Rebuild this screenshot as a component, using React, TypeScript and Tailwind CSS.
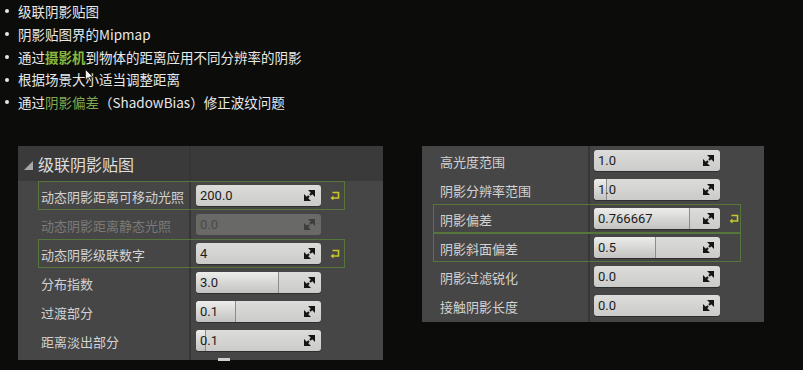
import type { ReactNode } from 'react'

type Row = {
  label: string
  value: string
  highlight?: boolean
  disabled?: boolean
  reset?: boolean
  fill?: number
}

const leftRows: Row[] = [
  { label: '动态阴影距离可移动光照', value: '200.0', highlight: true, reset: true },
  { label: '动态阴影距离静态光照', value: '0.0', disabled: true },
  { label: '动态阴影级联数字', value: '4', highlight: true, reset: true },
  { label: '分布指数', value: '3.0', fill: 83 },
  { label: '过渡部分', value: '0.1', fill: 40 },
  { label: '距离淡出部分', value: '0.1', fill: 10 },
]

const rightRows: Row[] = [
  { label: '高光度范围', value: '1.0' },
  { label: '阴影分辨率范围', value: '1.0', fill: 13 },
  { label: '阴影偏差', value: '0.766667', fill: 96, highlight: true, reset: true },
  { label: '阴影斜面偏差', value: '0.5', fill: 62, highlight: true },
  { label: '阴影过滤锐化', value: '0.0' },
  { label: '接触阴影长度', value: '0.0' },
]

const cjk = { fontFamily: '"Noto Sans CJK SC", "Noto Sans", sans-serif' }

function SpinIcon({ dim }: { dim?: boolean }) {
  const c = dim ? '#3e3e3e' : '#151515'
  return (
    <svg width="11" height="11" viewBox="0 0 11 11">
      <polygon points="4,0 11,0 11,7" fill={c} />
      <line x1="8.5" y1="2.5" x2="6" y2="5" stroke={c} strokeWidth="2.2" />
      <polygon points="0,4 0,11 7,11" fill={c} />
      <line x1="2.5" y1="8.5" x2="5" y2="6" stroke={c} strokeWidth="2.2" />
    </svg>
  )
}

function ResetIcon() {
  return (
    <svg width="11" height="10" viewBox="0 0 11 10">
      <path d="M2.5 1.5 H8.5 V7 H3" fill="none" stroke="#c9c62c" strokeWidth="1.6" />
      <polygon points="0.5,7 3.5,4.6 3.5,9.4" fill="#c9c62c" />
    </svg>
  )
}

function Field({ row, width }: { row: Row; width: number }) {
  if (row.disabled) {
    return (
      <div
        className="relative flex h-[21px] items-center rounded-[3px] bg-[#696968] pl-[4px]"
        style={{ width }}
      >
        <span className="text-[13px] text-[#4a4a4a]" style={{ fontFamily: 'Roboto, sans-serif' }}>
          {row.value}
        </span>
        <span className="absolute right-[6px] top-[5px]">
          <SpinIcon dim />
        </span>
      </div>
    )
  }
  return (
    <div
      className="relative flex h-[21px] items-center overflow-hidden rounded-[3px] bg-gradient-to-b from-[#dcdcda] to-[#cbcbc9] pl-[4px] shadow-[0_1px_0_#2e2e2e]"
      style={{ width }}
    >
      {row.fill ? (
        <div
          className="absolute left-0 top-0 h-full rounded-l-[3px] border-r border-[#8c8c8a] bg-gradient-to-b from-[#ededeb] to-[#c2c2c0]"
          style={{ width: row.fill }}
        />
      ) : null}
      <span className="relative text-[13px] text-[#1c1c1c]" style={{ fontFamily: 'Roboto, sans-serif' }}>
        {row.value}
      </span>
      <span className="absolute right-[6px] top-[5px]">
        <SpinIcon />
      </span>
    </div>
  )
}

function PropRow({
  row,
  labelW,
  fieldW,
  labelPad,
}: {
  row: Row
  labelW: number
  fieldW: number
  labelPad: string
}) {
  return (
    <div
      className={`flex h-[29px] items-center ${row.highlight ? 'border border-[#56763b]' : 'border border-transparent'}`}
    >
      <div className={`shrink-0 ${labelPad}`} style={{ width: labelW - 1 }}>
        <span
          className={`text-[13px] ${row.disabled ? 'text-[#7a7a7a]' : 'text-[#d2d2d2]'}`}
          style={cjk}
        >
          {row.label}
        </span>
      </div>
      <Field row={row} width={fieldW} />
      <div className="flex flex-1 items-center justify-start pl-[9px]">
        {row.reset ? <ResetIcon /> : null}
      </div>
    </div>
  )
}

function Bullet({ children }: { children: ReactNode }) {
  return (
    <div className="flex items-center leading-[22.75px]">
      <span className="mr-[9px] h-[4px] w-[4px] rounded-full bg-[#e6e6e6]" />
      <span className="text-[13.5px] text-[#e8e8e8]" style={cjk}>
        {children}
      </span>
    </div>
  )
}

export default function App() {
  return (
    <div className="relative h-[370px] w-[803px] overflow-hidden bg-[#0c0d0b]">
      {/* Bullets */}
      <div className="h-[146px] pl-[5px]">
        <Bullet>级联阴影贴图</Bullet>
        <Bullet>阴影贴图界的Mipmap</Bullet>
        <Bullet>
          通过<span className="font-bold text-[#86b83f]">摄影机</span>到物体的距离应用不同分辨率的阴影
        </Bullet>
        <Bullet>根据场景大小适当调整距离</Bullet>
        <Bullet>
          通过<span className="text-[#7fa851]">阴影偏差</span>（ShadowBias）修正波纹问题
        </Bullet>
      </div>

      {/* Cursor */}
      <svg className="absolute left-[85px] top-[69px]" width="9" height="13" viewBox="0 0 9 13">
        <path d="M0.5 0.5 V11 L3 8.5 L5 12.5 L6.5 11.8 L4.6 8 H8 Z" fill="#f2f2f2" stroke="#222" strokeWidth="0.8" />
      </svg>

      <div className="flex items-start">
        {/* Left panel */}
        <div className="relative ml-[18px] w-[365px] bg-[#464646] pb-[5px]">
          <div className="absolute bottom-0 left-[171px] top-0 w-[2px] bg-[#363636]" />
          <div className="flex h-[35px] items-center bg-[#3a3a3a] pl-[6px]">
            <svg width="9" height="9" viewBox="0 0 9 9" className="mr-[5px] mt-[3px]">
              <polygon points="9,0 9,9 0,9" fill="#a8a8a8" />
            </svg>
            <span className="text-[16px] text-[#dedede]" style={cjk}>
              级联阴影贴图
            </span>
          </div>
          <div className="relative ml-[20px] w-[307px]">
            {leftRows.map((r) => (
              <PropRow key={r.label} row={r} labelW={158} fieldW={125} labelPad="pl-[2px]" />
            ))}
          </div>
        </div>

        {/* Right panel */}
        <div className="relative ml-[39px] w-[342px] bg-[#464646] pb-[2px]">
          <div className="absolute bottom-0 left-[166px] top-0 w-[2px] bg-[#363636]" />
          <div className="relative ml-[11px] w-[308px]">
            {rightRows.map((r) => (
              <PropRow key={r.label} row={r} labelW={161} fieldW={126} labelPad="pl-[6px]" />
            ))}
          </div>
        </div>
      </div>

      <div className="absolute left-[218px] top-[358px] h-[3px] w-[12px] bg-[#cfcfcf]" />
    </div>
  )
}
